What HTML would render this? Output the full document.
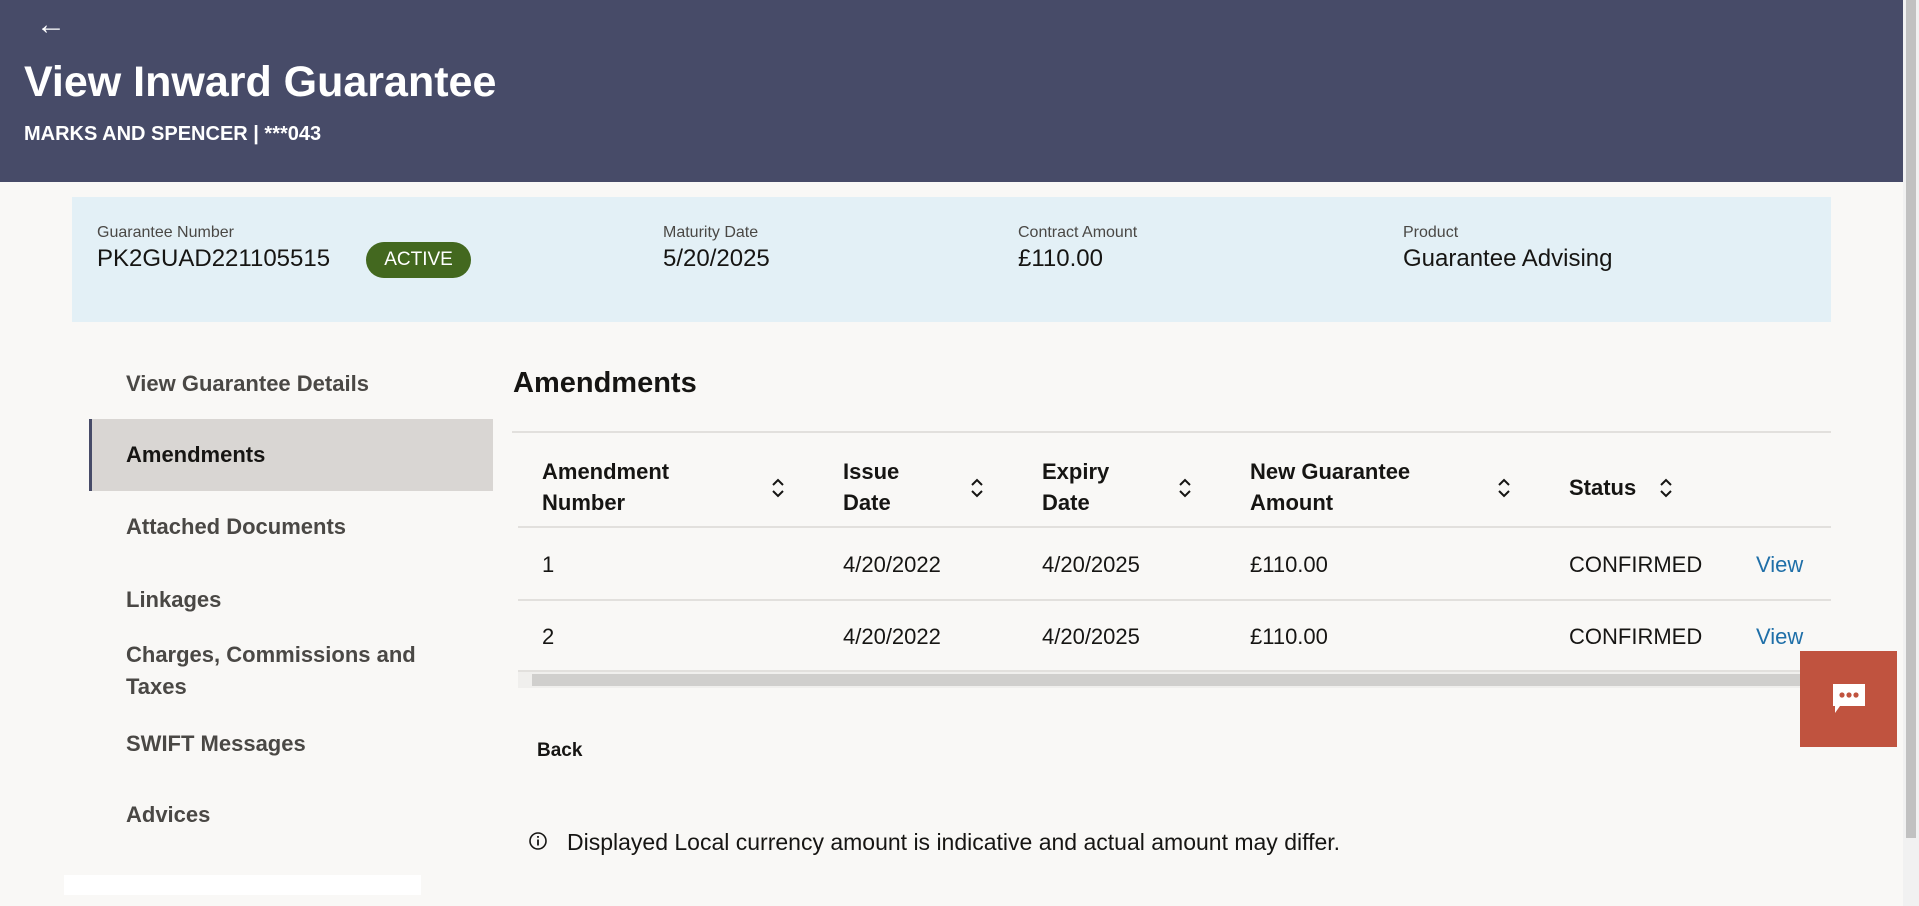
<!DOCTYPE html>
<html><head><meta charset="utf-8"><style>
*{margin:0;padding:0;box-sizing:border-box}
body{width:1919px;height:906px;overflow:hidden;background:#f9f8f6;font-family:"Liberation Sans",sans-serif;color:#161513;position:relative}
.a{position:absolute;white-space:nowrap}
.hdr{position:absolute;left:0;top:0;width:1903px;height:182px;background:#474b68}
.sb{position:absolute;left:1903px;top:0;width:16px;height:906px;background:#f1f1f1}
.sbt{position:absolute;left:1906px;top:0;width:10px;height:838px;background:#c1c1c1}
.panel{position:absolute;left:72px;top:197px;width:1759px;height:125px;background:#e3f0f6}
.lbl{font-size:16px;color:#4a4845}
.val{font-size:24px}
.nav{font-size:22px;color:#4a4845;left:126px;font-weight:bold}
.th{font-size:22px;font-weight:bold;line-height:31px}
.td{font-size:22px}
.line{position:absolute;height:2px;background:#e2e0dd}
.view{color:#1f6fa8;font-size:22px}
</style></head><body>
<div class="hdr"></div>
<div class="sb"></div><div class="sbt"></div>
<div class="a" style="left:36px;top:8px;color:#fff;font-size:30px">&#8592;</div>
<div class="a" style="left:24px;top:58px;color:#fff;font-size:43px;font-weight:bold">View Inward Guarantee</div>
<div class="a" style="left:24px;top:123px;color:#fff;font-size:20px;font-weight:bold">MARKS AND SPENCER | ***043</div>

<div class="panel"></div>
<div class="a lbl" style="left:97px;top:224px">Guarantee Number</div>
<div class="a val" style="left:97px;top:245px">PK2GUAD221105515</div>
<div class="a" style="left:366px;top:242px;width:105px;height:36px;border-radius:18px;background:#43681f;color:#fff;font-size:19px;text-align:center;line-height:36px">ACTIVE</div>
<div class="a lbl" style="left:663px;top:224px">Maturity Date</div>
<div class="a val" style="left:663px;top:245px">5/20/2025</div>
<div class="a lbl" style="left:1018px;top:224px">Contract Amount</div>
<div class="a val" style="left:1018px;top:245px">£110.00</div>
<div class="a lbl" style="left:1403px;top:224px">Product</div>
<div class="a val" style="left:1403px;top:245px">Guarantee Advising</div>

<div class="a" style="left:89px;top:419px;width:404px;height:72px;background:#d9d6d3;border-left:3px solid #474b68"></div>
<div class="a nav" style="top:371px">View Guarantee Details</div>
<div class="a nav" style="top:442px;color:#161513">Amendments</div>
<div class="a nav" style="top:514px">Attached Documents</div>
<div class="a nav" style="top:587px">Linkages</div>
<div class="a nav" style="top:642px">Charges, Commissions and</div>
<div class="a nav" style="top:674px">Taxes</div>
<div class="a nav" style="top:731px">SWIFT Messages</div>
<div class="a nav" style="top:802px">Advices</div>
<div class="a" style="left:64px;top:875px;width:357px;height:20px;background:#fff"></div>

<div class="a" style="left:513px;top:367px;font-size:29px;font-weight:bold">Amendments</div>
<div class="line" style="left:512px;top:431px;width:1319px"></div>

<div class="a th" style="left:542px;top:456px">Amendment<br>Number</div>
<div class="a th" style="left:843px;top:456px">Issue<br>Date</div>
<div class="a th" style="left:1042px;top:456px">Expiry<br>Date</div>
<div class="a th" style="left:1250px;top:456px">New Guarantee<br>Amount</div>
<div class="a th" style="left:1569px;top:472px">Status</div>
<svg class="a" style="left:771px;top:476px" width="14" height="24"><path d="M2 9 L7 4 L12 9 M2 15 L7 20 L12 15" fill="none" stroke="#161513" stroke-width="2"/></svg>
<svg class="a" style="left:970px;top:476px" width="14" height="24"><path d="M2 9 L7 4 L12 9 M2 15 L7 20 L12 15" fill="none" stroke="#161513" stroke-width="2"/></svg>
<svg class="a" style="left:1178px;top:476px" width="14" height="24"><path d="M2 9 L7 4 L12 9 M2 15 L7 20 L12 15" fill="none" stroke="#161513" stroke-width="2"/></svg>
<svg class="a" style="left:1497px;top:476px" width="14" height="24"><path d="M2 9 L7 4 L12 9 M2 15 L7 20 L12 15" fill="none" stroke="#161513" stroke-width="2"/></svg>
<svg class="a" style="left:1659px;top:476px" width="14" height="24"><path d="M2 9 L7 4 L12 9 M2 15 L7 20 L12 15" fill="none" stroke="#161513" stroke-width="2"/></svg>
<div class="line" style="left:518px;top:526px;width:1313px"></div>

<div class="a td" style="left:542px;top:552px">1</div>
<div class="a td" style="left:843px;top:552px">4/20/2022</div>
<div class="a td" style="left:1042px;top:552px">4/20/2025</div>
<div class="a td" style="left:1250px;top:552px">£110.00</div>
<div class="a td" style="left:1569px;top:552px">CONFIRMED</div>
<div class="a view" style="left:1756px;top:552px">View</div>
<div class="line" style="left:518px;top:599px;width:1313px"></div>

<div class="a td" style="left:542px;top:624px">2</div>
<div class="a td" style="left:843px;top:624px">4/20/2022</div>
<div class="a td" style="left:1042px;top:624px">4/20/2025</div>
<div class="a td" style="left:1250px;top:624px">£110.00</div>
<div class="a td" style="left:1569px;top:624px">CONFIRMED</div>
<div class="a view" style="left:1756px;top:624px">View</div>
<div class="line" style="left:518px;top:670px;width:1313px"></div>
<div class="a" style="left:518px;top:672px;width:1313px;height:16px;background:#f0efed"></div>
<div class="a" style="left:532px;top:674px;width:1299px;height:12px;background:#d0cfcd"></div>

<div class="a" style="left:1800px;top:651px;width:97px;height:96px;background:#c0533f"></div>
<svg class="a" style="left:1830px;top:682px" width="38" height="34"><path d="M3 2 H35 V24 H10 L5 31 V24 H3 Z" fill="#fff"/><circle cx="12" cy="13" r="2.6" fill="#c0533f"/><circle cx="19" cy="13" r="2.6" fill="#c0533f"/><circle cx="26" cy="13" r="2.6" fill="#c0533f"/></svg>

<div class="a" style="left:537px;top:740px;font-size:19px;font-weight:bold">Back</div>

<svg class="a" style="left:528px;top:831px" width="20" height="20"><circle cx="10" cy="10" r="8" fill="none" stroke="#161513" stroke-width="1.6"/><rect x="9.1" y="8.5" width="1.8" height="6" fill="#161513"/><rect x="9.1" y="5" width="1.8" height="1.8" fill="#161513"/></svg>
<div class="a" style="left:567px;top:829px;font-size:23px">Displayed Local currency amount is indicative and actual amount may differ.</div>
</body></html>
